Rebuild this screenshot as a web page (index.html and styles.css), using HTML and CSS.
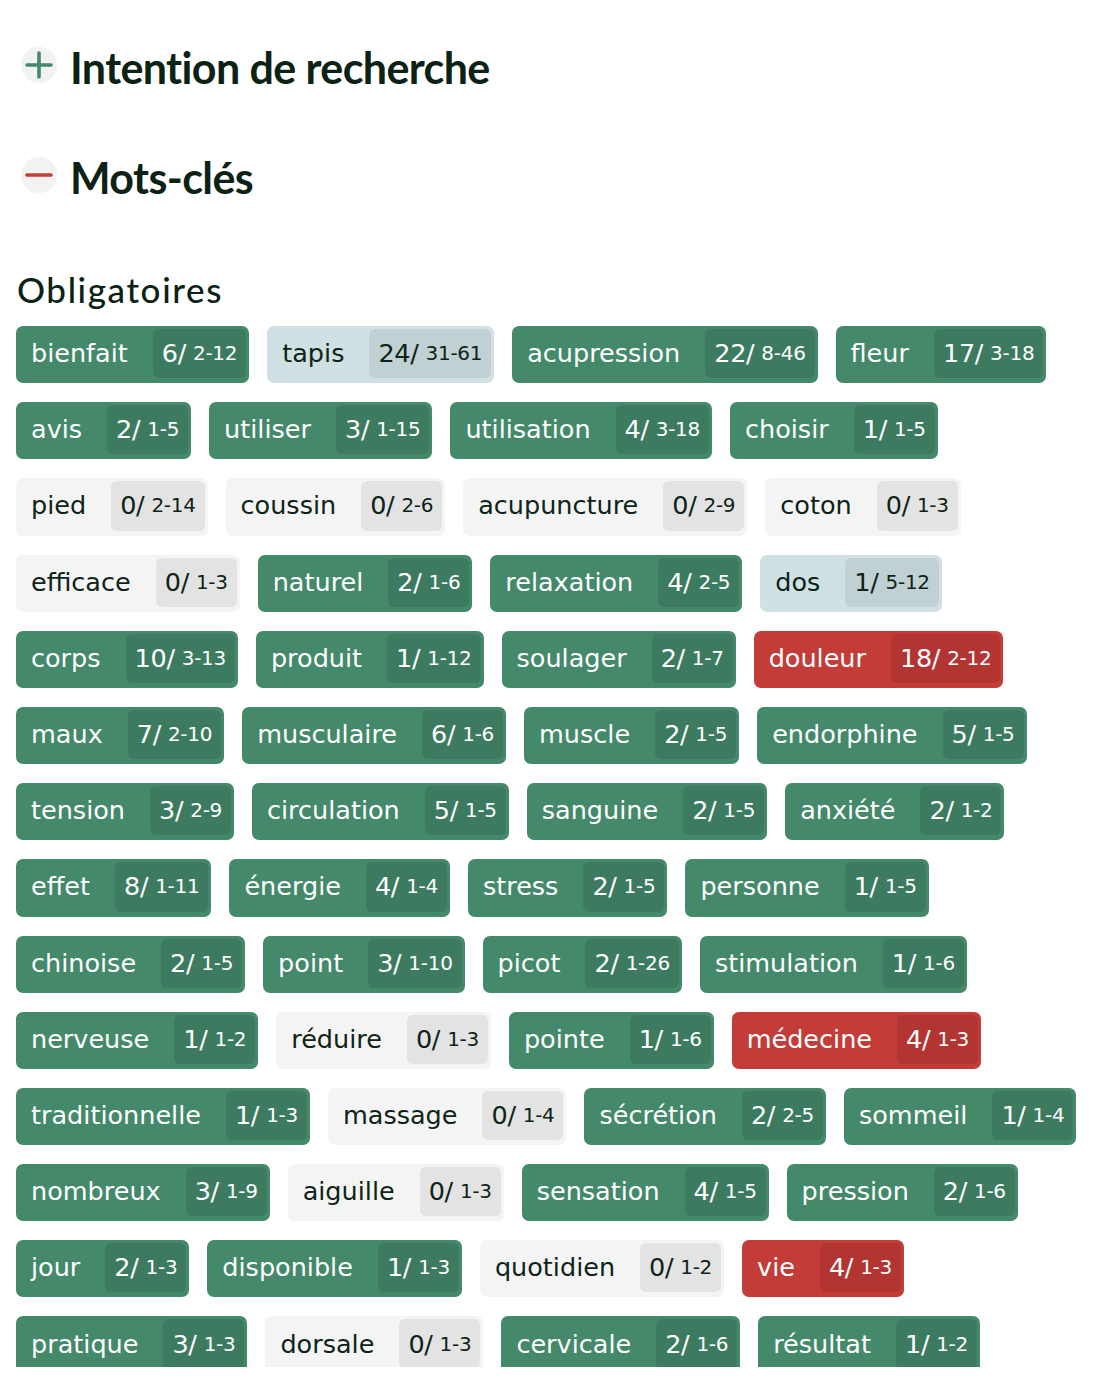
FILE: index.html
```html
<!DOCTYPE html>
<html lang="fr">
<head>
<meta charset="utf-8">
<title>Mots-clés</title>
<link rel="stylesheet" href="styles.css">
</head>
<body>
<div class="page">
  <section class="acc">
    <span class="toggle">
      <svg width="36" height="36" viewBox="0 0 36 36"><path d="M18 6v24M6 18h24" stroke="#43896a" stroke-width="3.6" stroke-linecap="round" fill="none"/></svg>
    </span>
    <h2 class="acc-title">Intention de recherche</h2>
  </section>
  <section class="acc">
    <span class="toggle">
      <svg width="36" height="36" viewBox="0 0 36 36"><path d="M6 18h24" stroke="#c33c37" stroke-width="3.6" stroke-linecap="round" fill="none"/></svg>
    </span>
    <h2 class="acc-title">Mots-clés</h2>
  </section>
  <h3 class="group-title">Obligatoires</h3>
  <div class="tags">
    <span class="tag ok"><span class="word">bienfait</span><span class="count">6/ <small>2-12</small></span></span>
    <span class="tag over"><span class="word">tapis</span><span class="count">24/ <small>31-61</small></span></span>
    <span class="tag ok"><span class="word">acupression</span><span class="count">22/ <small>8-46</small></span></span>
    <span class="tag ok"><span class="word">fleur</span><span class="count">17/ <small>3-18</small></span></span>

    <span class="tag ok"><span class="word">avis</span><span class="count">2/ <small>1-5</small></span></span>
    <span class="tag ok"><span class="word">utiliser</span><span class="count">3/ <small>1-15</small></span></span>
    <span class="tag ok"><span class="word">utilisation</span><span class="count">4/ <small>3-18</small></span></span>
    <span class="tag ok"><span class="word">choisir</span><span class="count">1/ <small>1-5</small></span></span>

    <span class="tag none"><span class="word">pied</span><span class="count">0/ <small>2-14</small></span></span>
    <span class="tag none"><span class="word">coussin</span><span class="count">0/ <small>2-6</small></span></span>
    <span class="tag none"><span class="word">acupuncture</span><span class="count">0/ <small>2-9</small></span></span>
    <span class="tag none"><span class="word">coton</span><span class="count">0/ <small>1-3</small></span></span>

    <span class="tag none"><span class="word">efficace</span><span class="count">0/ <small>1-3</small></span></span>
    <span class="tag ok"><span class="word">naturel</span><span class="count">2/ <small>1-6</small></span></span>
    <span class="tag ok"><span class="word">relaxation</span><span class="count">4/ <small>2-5</small></span></span>
    <span class="tag over"><span class="word">dos</span><span class="count">1/ <small>5-12</small></span></span>

    <span class="tag ok"><span class="word">corps</span><span class="count">10/ <small>3-13</small></span></span>
    <span class="tag ok"><span class="word">produit</span><span class="count">1/ <small>1-12</small></span></span>
    <span class="tag ok"><span class="word">soulager</span><span class="count">2/ <small>1-7</small></span></span>
    <span class="tag bad"><span class="word">douleur</span><span class="count">18/ <small>2-12</small></span></span>

    <span class="tag ok"><span class="word">maux</span><span class="count">7/ <small>2-10</small></span></span>
    <span class="tag ok"><span class="word">musculaire</span><span class="count">6/ <small>1-6</small></span></span>
    <span class="tag ok"><span class="word">muscle</span><span class="count">2/ <small>1-5</small></span></span>
    <span class="tag ok"><span class="word">endorphine</span><span class="count">5/ <small>1-5</small></span></span>

    <span class="tag ok"><span class="word">tension</span><span class="count">3/ <small>2-9</small></span></span>
    <span class="tag ok"><span class="word">circulation</span><span class="count">5/ <small>1-5</small></span></span>
    <span class="tag ok"><span class="word">sanguine</span><span class="count">2/ <small>1-5</small></span></span>
    <span class="tag ok"><span class="word">anxiété</span><span class="count">2/ <small>1-2</small></span></span>

    <span class="tag ok"><span class="word">effet</span><span class="count">8/ <small>1-11</small></span></span>
    <span class="tag ok"><span class="word">énergie</span><span class="count">4/ <small>1-4</small></span></span>
    <span class="tag ok"><span class="word">stress</span><span class="count">2/ <small>1-5</small></span></span>
    <span class="tag ok"><span class="word">personne</span><span class="count">1/ <small>1-5</small></span></span>

    <span class="tag ok"><span class="word">chinoise</span><span class="count">2/ <small>1-5</small></span></span>
    <span class="tag ok"><span class="word">point</span><span class="count">3/ <small>1-10</small></span></span>
    <span class="tag ok"><span class="word">picot</span><span class="count">2/ <small>1-26</small></span></span>
    <span class="tag ok"><span class="word">stimulation</span><span class="count">1/ <small>1-6</small></span></span>

    <span class="tag ok"><span class="word">nerveuse</span><span class="count">1/ <small>1-2</small></span></span>
    <span class="tag none"><span class="word">réduire</span><span class="count">0/ <small>1-3</small></span></span>
    <span class="tag ok"><span class="word">pointe</span><span class="count">1/ <small>1-6</small></span></span>
    <span class="tag bad"><span class="word">médecine</span><span class="count">4/ <small>1-3</small></span></span>

    <span class="tag ok"><span class="word">traditionnelle</span><span class="count">1/ <small>1-3</small></span></span>
    <span class="tag none"><span class="word">massage</span><span class="count">0/ <small>1-4</small></span></span>
    <span class="tag ok"><span class="word">sécrétion</span><span class="count">2/ <small>2-5</small></span></span>
    <span class="tag ok"><span class="word">sommeil</span><span class="count">1/ <small>1-4</small></span></span>

    <span class="tag ok"><span class="word">nombreux</span><span class="count">3/ <small>1-9</small></span></span>
    <span class="tag none"><span class="word">aiguille</span><span class="count">0/ <small>1-3</small></span></span>
    <span class="tag ok"><span class="word">sensation</span><span class="count">4/ <small>1-5</small></span></span>
    <span class="tag ok"><span class="word">pression</span><span class="count">2/ <small>1-6</small></span></span>

    <span class="tag ok"><span class="word">jour</span><span class="count">2/ <small>1-3</small></span></span>
    <span class="tag ok"><span class="word">disponible</span><span class="count">1/ <small>1-3</small></span></span>
    <span class="tag none"><span class="word">quotidien</span><span class="count">0/ <small>1-2</small></span></span>
    <span class="tag bad"><span class="word">vie</span><span class="count">4/ <small>1-3</small></span></span>

    <span class="tag ok"><span class="word">pratique</span><span class="count">3/ <small>1-3</small></span></span>
    <span class="tag none"><span class="word">dorsale</span><span class="count">0/ <small>1-3</small></span></span>
    <span class="tag ok"><span class="word">cervicale</span><span class="count">2/ <small>1-6</small></span></span>
    <span class="tag ok"><span class="word">résultat</span><span class="count">1/ <small>1-2</small></span></span>
  </div>
</div>
</body>
</html>
```

FILE: styles.css
```css
html, body {
  margin: 0;
  padding: 0;
  background: #ffffff;
}

.page {
  box-sizing: border-box;
  height: 1367px;
  overflow: hidden;
  padding: 38px 0 0 16px;
  color: #0d2416;
  font-family: "DejaVu Sans", "Noto Sans", sans-serif;
}

.acc {
  display: flex;
  align-items: center;
  gap: 13px;
  height: 60px;
  margin: 0 0 50px 5px;
}

.toggle {
  display: flex;
  width: 36px;
  height: 36px;
  border-radius: 50%;
  background: #f2f2f2;
  flex: none;
  margin-top: -7px;
}

.acc-title {
  margin: 0;
  font-family: "Lato", sans-serif;
  font-weight: 700;
  font-size: 43px;
  line-height: 60px;
  color: #0b2214;
  letter-spacing: -0.6px;
}

.group-title {
  margin: 0 0 14px 1px;
  padding-top: 8px;
  font-family: "Lato", sans-serif;
  font-weight: 500;
  font-size: 35px;
  line-height: 46px;
  letter-spacing: 1.6px;
  color: #0b2214;
}

.tags {
  display: flex;
  flex-wrap: wrap;
  width: 1092px;
  column-gap: 18px;
  row-gap: 19px;
}

.tag {
  box-sizing: border-box;
  display: inline-flex;
  align-items: stretch;
  height: 57.2px;
  padding: 3px 3px 5px 15px;
  border-radius: 7px;
  font-size: 25.5px;
  white-space: nowrap;
}

.word {
  display: flex;
  align-items: center;
  margin-right: 25px;
  padding-bottom: 1px;
}

.count {
  display: flex;
  align-items: center;
  gap: 7px;
  padding: 0 9px 1px 9px;
  border-radius: 6px;
  font-size: 25.5px;
  letter-spacing: -0.3px;
}

.count small {
  font-size: 20px;
  letter-spacing: -0.3px;
}

.tag.ok { background: #43896a; color: #ffffff; }
.tag.ok .count { background: #3c7b5f; }

.tag.bad { background: #c33c37; color: #ffffff; }
.tag.bad .count { background: #b23532; }

.tag.over { background: #d0e1e3; color: #0d2416; }
.tag.over .count { background: #c0d0d3; }

.tag.none { background: #f4f4f4; color: #0d2416; }
.tag.none .count { background: #e3e3e3; }
```
